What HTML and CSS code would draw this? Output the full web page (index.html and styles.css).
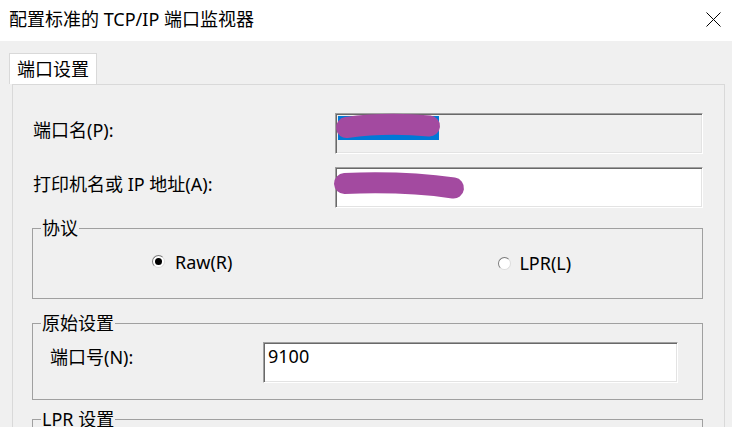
FILE: index.html
```html
<!DOCTYPE html>
<html lang="zh-CN">
<head>
    <meta charset="UTF-8">
    <meta name="viewport" content="width=device-width, initial-scale=1.0">
    <title>配置标准的 TCP/IP 端口监视器</title>
    <link rel="stylesheet" href="styles.css">
</head>
<body>
    <div class="titlebar">
        <span class="title">配置标准的 TCP/IP 端口监视器</span>
        <svg class="close" width="15" height="15" viewBox="0 0 15 15">
            <path d="M0.5 0.5 L14.5 14.5 M14.5 0.5 L0.5 14.5" stroke="#000" stroke-width="1" fill="none"/>
        </svg>
    </div>

    <div class="dialog">
        <div class="tabs">
            <div class="tab">端口设置</div>
        </div>

        <div class="page">
            <div class="row">
                <label class="label">端口名(P):</label>
                <div class="edit disabled">
                    <!-- 已涂抹的端口名 -->
                    <svg class="scribble" width="110" height="28" viewBox="0 0 110 28">
                        <rect x="2" y="1" width="101" height="24" fill="#0078d7"/>
                        <path d="M10.5 12.5 Q50 7 93.5 11" stroke="#a34aa0" stroke-width="21" stroke-linecap="round" fill="none"/>
                    </svg>
                </div>
            </div>
            <div class="row second">
                <label class="label">打印机名或 IP 地址(A):</label>
                <div class="edit">
                    <svg class="scribble wide" width="134" height="32" viewBox="0 0 134 32">
                        <path d="M10.5 14.5 Q70 12 119.5 19" stroke="#a34aa0" stroke-width="21" stroke-linecap="round" fill="none"/>
                    </svg>
                </div>
            </div>

            <fieldset class="group protocol">
                <legend>协议</legend>
                <div class="radios">
                    <div class="radio-item raw-item">
                        <span class="radio checked"></span>
                        <span>Raw(R)</span>
                    </div>
                    <div class="radio-item lower">
                        <span class="radio"></span>
                        <span>LPR(L)</span>
                    </div>
                </div>
            </fieldset>

            <fieldset class="group raw">
                <legend>原始设置</legend>
                <div class="row inset">
                    <label class="label short">端口号(N):</label>
                    <div class="edit port">9100</div>
                </div>
            </fieldset>

            <fieldset class="group lpr">
                <legend>LPR 设置</legend>
            </fieldset>
        </div>
    </div>
</body>
</html>
```

FILE: styles.css
```css
* {
    margin: 0;
    padding: 0;
    box-sizing: border-box;
}
body {
    font-family: "Noto Sans", "Noto Sans CJK SC", sans-serif;
    font-size: 18px;
    line-height: 24px;
    color: #000;
    background-color: #f0f0f0;
    height: 427px;
    overflow: hidden;
}
.titlebar {
    height: 41px;
    background-color: #fff;
    display: flex;
    justify-content: space-between;
    align-items: center;
    padding: 0 11px 3px 9px;
}
.title {
    font-size: 18px;
}
.close {
    display: block;
}
.dialog {
    padding: 12px 7px 0 9px;
}
.tabs {
    display: flex;
}
.tab {
    width: 88px;
    height: 31px;
    line-height: 30px;
    padding-left: 7px;
    background-color: #fff;
    border: 1px solid #d9d9d9;
    border-bottom: none;
}
.page {
    margin-left: 3px;
    height: 360px;
    border: 1px solid #d9d9d9;
    padding: 28px 20px 0 20px;
}
.row {
    display: flex;
    align-items: flex-start;
}
.row.second {
    margin-top: 13px;
}
.row.inset {
    padding-left: 17px;
}
.label {
    width: 302px;
    padding-top: 5px;
}
.label.short {
    width: 213px;
    padding-top: 3px;
}
.edit {
    width: 368px;
    height: 41px;
    background-color: #fff;
    border: 1px solid;
    border-color: #a0a0a0 #fff #fff #a0a0a0;
    box-shadow: inset 1px 1px 0 #696969, inset -1px -1px 0 #e3e3e3;
    padding: 1px 0 0 4px;
    overflow: visible;
}
.edit.disabled {
    background-color: #f0f0f0;
}
.edit.port {
    width: 415px;
    padding-top: 1px;
}
.scribble {
    display: block;
    margin-left: -4px;
    overflow: visible;
}
.scribble.wide {
    margin-left: -6px;
}
.group {
    border: 1px solid #a0a0a0;
    margin-left: -1px;
    width: 671px;
    min-width: 0;
}
.group legend {
    margin-left: 8px;
    padding: 0 1px;
    line-height: 24px;
}
.protocol {
    margin-top: 8px;
    padding: 8px 0 26px 0;
}
.radios {
    display: grid;
    grid-template-columns: 1fr 1fr;
    justify-items: center;
    height: 24px;
}
.radio-item {
    display: flex;
    align-items: center;
    gap: 10px;
}
.radio-item.raw-item {
    margin-right: 16px;
}
.radio-item.lower {
    gap: 8px;
    margin-top: 3px;
}
.radio {
    width: 13px;
    height: 13px;
    border-radius: 50%;
    background-color: #fff;
    border: 1px solid;
    border-color: #7a7a7a #dcdcdc #dcdcdc #7a7a7a;
    display: flex;
    align-items: center;
    justify-content: center;
}
.radio.checked::after {
    content: "";
    width: 7px;
    height: 7px;
    border-radius: 50%;
    background-color: #000;
}
.raw {
    margin-top: 12px;
    padding: 7px 0 16px 0;
}
.lpr {
    margin-top: 7px;
    height: 80px;
}
```
